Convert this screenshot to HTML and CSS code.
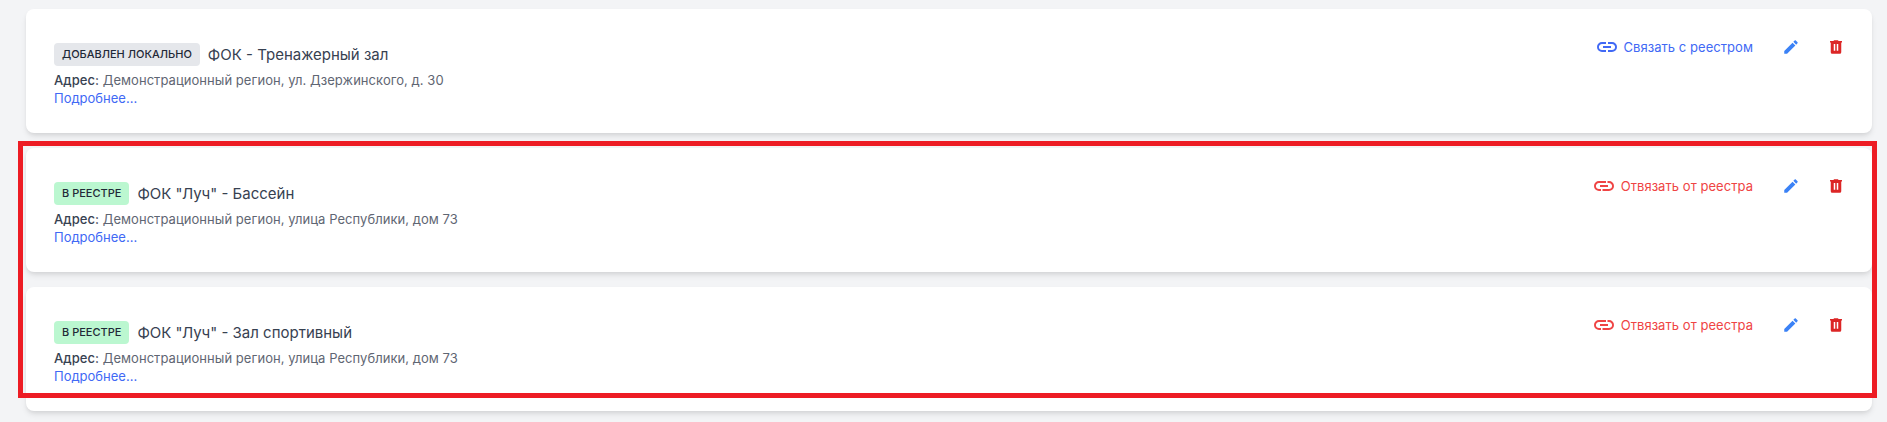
FILE: index.html
```html
<!DOCTYPE html>
<html>
<head>
  <meta charset="UTF-8">
  <title>Объекты</title>
  <link rel="stylesheet" href="styles.css">
</head>
<body>
  <div class="list">

    <div class="card">
      <div class="info">
        <div class="heading">
          <span class="badge badge-local">Добавлен локально</span>
          <span class="title">ФОК - Тренажерный зал</span>
        </div>
        <div class="address"><b>Адрес:</b> Демонстрационный регион, ул. Дзержинского, д. 30</div>
        <a class="more" href="#">Подробнее...</a>
      </div>
      <div class="actions">
        <a class="action link-on" href="#">
          <svg class="icon-link" viewBox="0 0 24 24"><path d="M3.9,12C3.9,10.29 5.29,8.9 7,8.9H11V7H7A5,5 0 0,0 2,12A5,5 0 0,0 7,17H11V15.1H7C5.29,15.1 3.9,13.71 3.9,12M8,13H16V11H8V13M17,7H13V8.9H17C18.71,8.9 20.1,10.29 20.1,12C20.1,13.71 18.71,15.1 17,15.1H13V17H17A5,5 0 0,0 22,12A5,5 0 0,0 17,7Z"/></svg>
          Связать с реестром
        </a>
        <svg class="icon-btn edit" viewBox="0 0 24 24"><path d="M20.71,7.04C21.1,6.65 21.1,6 20.71,5.63L18.37,3.29C18,2.9 17.35,2.9 16.96,3.29L15.12,5.12L18.87,8.87M3,17.25V21H6.75L17.81,9.93L14.06,6.18L3,17.25Z"/></svg>
        <svg class="icon-btn remove" viewBox="0 0 24 24"><path d="M9,3V4H4V6H5V19A2,2 0 0,0 7,21H17A2,2 0 0,0 19,19V6H20V4H15V3H9M9,8H11V17H9V8M13,8H15V17H13V8Z"/></svg>
      </div>
    </div>

    <div class="card">
      <div class="info">
        <div class="heading">
          <span class="badge badge-registry">В реестре</span>
          <span class="title">ФОК "Луч" - Бассейн</span>
        </div>
        <div class="address"><b>Адрес:</b> Демонстрационный регион, улица Республики, дом 73</div>
        <a class="more" href="#">Подробнее...</a>
      </div>
      <div class="actions">
        <a class="action link-off" href="#">
          <svg class="icon-link" viewBox="0 0 24 24"><path d="M3.9,12C3.9,10.29 5.29,8.9 7,8.9H14V7H7A5,5 0 0,0 2,12A5,5 0 0,0 7,17H9V15.1H7C5.29,15.1 3.9,13.71 3.9,12M8,13H16V11H8V13M17,7H15.5V8.9H17C18.71,8.9 20.1,10.29 20.1,12C20.1,13.71 18.71,15.1 17,15.1H10.5V17H17A5,5 0 0,0 22,12A5,5 0 0,0 17,7Z"/></svg>
          Отвязать от реестра
        </a>
        <svg class="icon-btn edit" viewBox="0 0 24 24"><path d="M20.71,7.04C21.1,6.65 21.1,6 20.71,5.63L18.37,3.29C18,2.9 17.35,2.9 16.96,3.29L15.12,5.12L18.87,8.87M3,17.25V21H6.75L17.81,9.93L14.06,6.18L3,17.25Z"/></svg>
        <svg class="icon-btn remove" viewBox="0 0 24 24"><path d="M9,3V4H4V6H5V19A2,2 0 0,0 7,21H17A2,2 0 0,0 19,19V6H20V4H15V3H9M9,8H11V17H9V8M13,8H15V17H13V8Z"/></svg>
      </div>
    </div>

    <div class="card">
      <div class="info">
        <div class="heading">
          <span class="badge badge-registry">В реестре</span>
          <span class="title">ФОК "Луч" - Зал спортивный</span>
        </div>
        <div class="address"><b>Адрес:</b> Демонстрационный регион, улица Республики, дом 73</div>
        <a class="more" href="#">Подробнее...</a>
      </div>
      <div class="actions">
        <a class="action link-off" href="#">
          <svg class="icon-link" viewBox="0 0 24 24"><path d="M3.9,12C3.9,10.29 5.29,8.9 7,8.9H14V7H7A5,5 0 0,0 2,12A5,5 0 0,0 7,17H9V15.1H7C5.29,15.1 3.9,13.71 3.9,12M8,13H16V11H8V13M17,7H15.5V8.9H17C18.71,8.9 20.1,10.29 20.1,12C20.1,13.71 18.71,15.1 17,15.1H10.5V17H17A5,5 0 0,0 22,12A5,5 0 0,0 17,7Z"/></svg>
          Отвязать от реестра
        </a>
        <svg class="icon-btn edit" viewBox="0 0 24 24"><path d="M20.71,7.04C21.1,6.65 21.1,6 20.71,5.63L18.37,3.29C18,2.9 17.35,2.9 16.96,3.29L15.12,5.12L18.87,8.87M3,17.25V21H6.75L17.81,9.93L14.06,6.18L3,17.25Z"/></svg>
        <svg class="icon-btn remove" viewBox="0 0 24 24"><path d="M9,3V4H4V6H5V19A2,2 0 0,0 7,21H17A2,2 0 0,0 19,19V6H20V4H15V3H9M9,8H11V17H9V8M13,8H15V17H13V8Z"/></svg>
      </div>
    </div>

  </div>

  <!-- red frame drawn over the two registry cards -->
  <div class="highlight"></div>
</body>
</html>
```

FILE: styles.css
```css
html, body {
  height: 100%;
  overflow: hidden;
}

body {
  font-family: 'Inter', sans-serif;
  background: #f3f4f6;
  color: #1f2937;
  margin: 0;
}

.list {
  display: flex;
  flex-direction: column;
  gap: 15px;
  padding: 9px 15px 0 26px;
}

.card {
  display: flex;
  justify-content: space-between;
  align-items: flex-start;
  height: 124px;
  box-sizing: border-box;
  padding: 26px 27px 0 28px;
  background: white;
  border-radius: 8px;
  box-shadow: 0 4px 6px -1px rgba(0, 0, 0, 0.1), 0 2px 4px -1px rgba(0, 0, 0, 0.06);
}

.info {
  margin-top: 8px;
}

.heading {
  display: flex;
  align-items: center;
  gap: 8px;
}

.badge {
  padding: 0 8px;
  height: 23px;
  line-height: 23px;
  border-radius: 4px;
  font-size: 11px;
  font-weight: 500;
  text-transform: uppercase;
}

.badge-local {
  background: #e5e7eb;
}

.badge-registry {
  background: #bbf7d0;
}

.title {
  font-size: 15px;
  font-weight: 400;
  color: #374151;
}

.address {
  margin-top: 5px;
  font-size: 13px;
  line-height: 18px;
  letter-spacing: 0.05px;
  color: #5f6673;
}

.address b {
  font-weight: 500;
  color: #374151;
}

.more {
  display: block;
  font-size: 13px;
  line-height: 18px;
  color: #4169f5;
  text-decoration: none;
}

.actions {
  display: flex;
  align-items: center;
  height: 24px;
}

.action {
  display: flex;
  align-items: center;
  gap: 5px;
  font-size: 13px;
  letter-spacing: 0.05px;
  text-decoration: none;
}

.link-on {
  color: #4169f5;
}

.link-off {
  color: #ef4444;
}

.icon-link {
  width: 24px;
  height: 24px;
  fill: currentColor;
}

.icon-btn {
  width: 18px;
  height: 18px;
}

.edit {
  margin-left: 29px;
  fill: #3b82f6;
}

.remove {
  margin-left: 27px;
  fill: #dc2626;
}

.highlight {
  position: absolute;
  left: 18px;
  top: 141px;
  width: 1849px;
  height: 247px;
  border: 5px solid #ed1c24;
}
```
